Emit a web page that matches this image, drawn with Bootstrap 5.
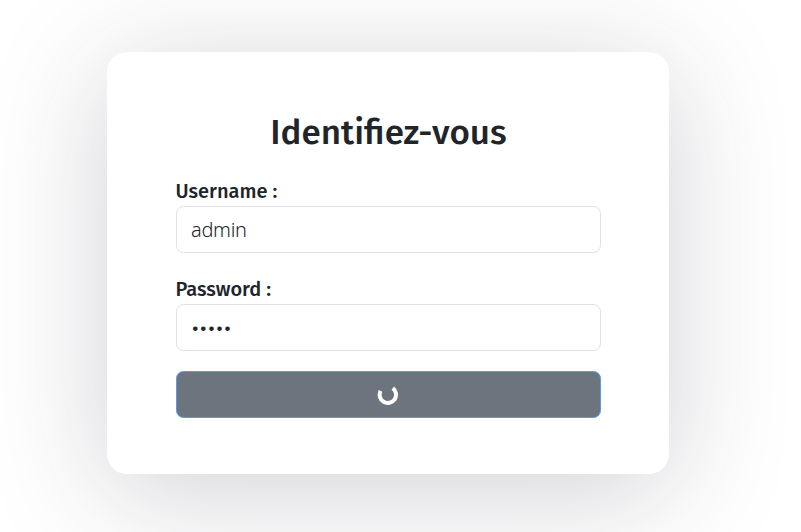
<!DOCTYPE html>
<html lang="fr">
<head>
<meta charset="utf-8">
<meta name="viewport" content="width=device-width, initial-scale=1">
<title>Identifiez-vous</title>
<link href="https://cdn.jsdelivr.net/npm/bootstrap@5.3.0/dist/css/bootstrap.min.css" rel="stylesheet">
<style>
body{font-family:"Fira Sans","Noto Sans",sans-serif;font-size:20px;background:#fff;color:#212529;height:532px;overflow:hidden;padding:52px 0 0 107px}
.login-card{width:562px;height:422px;border-radius:20px;padding:58px 68px 0 69px;background:#fff;box-shadow:0 18px 120px rgba(40,40,60,.21)}
.login-title{font-size:35px;font-weight:500;line-height:44px;margin-bottom:22px}
.form-label{font-weight:500;line-height:30px;height:30px;margin:0 0 0 -.5px;display:block}
.form-control{height:47px;font-size:20px;padding:7px 14px;border-color:#dee2e6;border-radius:7.5px;font-family:"Noto Sans",sans-serif;font-weight:300;letter-spacing:-.3px}
.form-control[type=password]{font-family:"Fira Sans","Noto Sans",sans-serif;font-weight:400;letter-spacing:1.6px;padding-left:15px;padding-top:8px;padding-bottom:6px}
.field-gap{margin-bottom:21px}
.field-gap + .field-gap{margin-bottom:20px}
.login-btn{height:47px;background:#6c757d;border:1px solid #5a9bf8;border-radius:7.5px}
.login-btn svg{margin-right:1px}
</style>
</head>
<body>
<main class="login-card">
<h1 class="login-title text-center">Identifiez-vous</h1>
<form>
<div class="field-gap">
<label class="form-label" for="user">Username :</label>
<input class="form-control" id="user" type="text" value="admin">
</div>
<div class="field-gap">
<label class="form-label" for="pass">Password :</label>
<input class="form-control" id="pass" type="password" value="admin">
</div>
<button class="btn login-btn w-100 d-flex align-items-center justify-content-center p-0" type="button" aria-label="Connexion">
<svg width="22" height="22" viewBox="0 0 22 22" fill="none" stroke="#fff" stroke-width="4"><path d="M3.6 6.9A8.2 8.2 0 1 0 15.8 4.2"/></svg>
</button>
</form>
</main>
<script src="https://cdn.jsdelivr.net/npm/bootstrap@5.3.0/dist/js/bootstrap.bundle.min.js"></script>
</body>
</html>
